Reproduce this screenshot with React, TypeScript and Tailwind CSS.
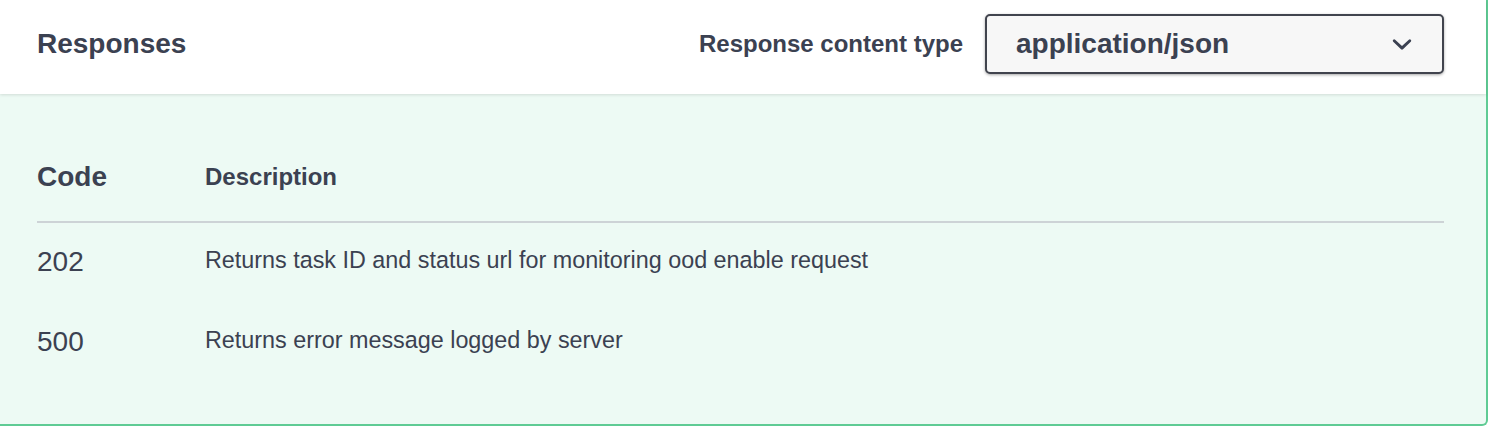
const rows = [
  { code: '202', text: 'Returns task ID and status url for monitoring ood enable request' },
  { code: '500', text: 'Returns error message logged by server' },
];

export default function App() {
  return (
    <div className="w-[1488px] h-[426px] overflow-hidden bg-white font-['Liberation_Sans',Arial,sans-serif] text-[#3b4151]">
      <div className="h-[426px] border-r-2 border-b-2 border-[#5fcb94] rounded-br-[6px] bg-[#edfaf4] flex flex-col">
        {/* section header */}
        <div className="relative z-10 h-[94px] shrink-0 bg-white shadow-[0_1px_3px_rgba(0,0,0,0.12)] flex items-center justify-between pl-[37px] pr-[42px] pb-[6px]">
          <h4 className="text-[28px] font-bold leading-none">Responses</h4>
          <div className="flex items-center gap-[22px]">
            <span className="text-[24px] font-bold leading-none">Response content type</span>
            <div className="w-[459px] h-[60px] border-2 border-[#41444e] rounded-[5px] bg-[#f7f7f7] shadow-[0_1px_3px_rgba(0,0,0,0.35)] flex items-center justify-between pl-[29px] pr-[20px]">
              <span className="text-[28px] font-bold leading-none">application/json</span>
              <svg viewBox="0 0 20 20" className="w-[40px] h-[40px]" fill="#3b4151">
                <path d="M13.418 7.859a.695.695 0 0 1 .978 0 .68.68 0 0 1 0 .969l-3.908 3.83a.697.697 0 0 1-.979 0l-3.908-3.83a.68.68 0 0 1 0-.969.695.695 0 0 1 .978 0L10 11l3.418-3.141z" />
              </svg>
            </div>
          </div>
        </div>

        {/* responses table */}
        <div className="pl-[37px] pr-[42px] pt-[61px]">
          <div className="grid grid-cols-[168px_1fr] h-[44px] items-center mb-[22px]">
            <span className="text-[28px] font-bold leading-none">Code</span>
            <span className="text-[24px] font-bold leading-none">Description</span>
          </div>
          <div className="border-b-2 border-[#cdd3d6]" />
          {rows.map((r) => (
            <div key={r.code} className="grid grid-cols-[168px_1fr] h-[80px] pt-[23px] items-start">
              <span className="text-[28px] leading-[32px]">{r.code}</span>
              <span className="text-[23.35px] leading-[28px]">{r.text}</span>
            </div>
          ))}
        </div>
      </div>
    </div>
  );
}
